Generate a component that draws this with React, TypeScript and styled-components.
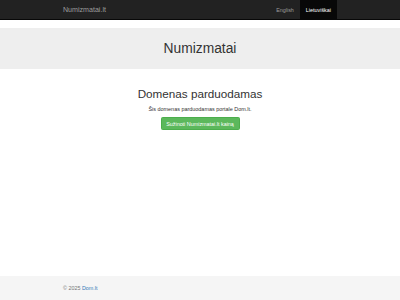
import styled, { createGlobalStyle } from "styled-components";

const GlobalStyle = createGlobalStyle`
    html, body {
        margin: 0;
        padding: 0;
        background: #fff;
        font-family: "Liberation Sans", Arial, sans-serif;
        color: #333;
    }
    #root {
        min-height: 300px;
    }
`;

const Page = styled.div`
    display: flex;
    flex-direction: column;
    min-height: 300px;
`;

const Navbar = styled.nav`
    background: #222;
    border-bottom: 1px solid #080808;
    height: 19px;
    margin-bottom: 8px;
`;

const Container = styled.div`
    width: 274px;
    margin: 0 auto;
    display: flex;
    align-items: center;
    height: 100%;
`;

const Brand = styled.a`
    font-size: 7.1px;
    color: #9d9d9d;
    text-decoration: none;
    flex: 1;
`;

const NavLink = styled.a<{ $active?: boolean }>`
    display: flex;
    align-items: center;
    height: 19px;
    padding: 0 6px;
    font-size: 5.4px;
    text-decoration: none;
    color: ${p => p.$active ? "#fff" : "#9d9d9d"};
    background: ${p => p.$active ? "#080808" : "transparent"};
`;

const Jumbotron = styled.header`
    background: #eee;
    height: 41px;
    display: flex;
    align-items: center;
    justify-content: center;
`;

const Title = styled.h1`
    margin: 0;
    font-size: 13.8px;
    font-weight: 400;
    color: #333;
`;

const Main = styled.main`
    flex: 1;
    display: flex;
    flex-direction: column;
    align-items: center;
    padding-top: 17px;
`;

const Heading = styled.h2`
    margin: 0 0 4px;
    font-size: 11.7px;
    font-weight: 400;
    line-height: 15px;
    color: #333;
`;

const Lead = styled.p`
    margin: 0 0 4px;
    font-size: 5.45px;
    line-height: 8px;
`;

const Button = styled.a`
    display: flex;
    align-items: center;
    justify-content: center;
    width: 79px;
    height: 13px;
    box-sizing: border-box;
    background: #5cb85c;
    border: 1px solid #4cae4c;
    border-radius: 1.5px;
    color: #fff;
    font-size: 5.4px;
    text-decoration: none;
`;

const Footer = styled.footer`
    background: #f5f5f5;
    height: 24px;
`;

const FooterText = styled.p`
    margin: 0;
    font-size: 5.4px;
    color: #777;
`;

const FooterLink = styled.a`
    color: #337ab7;
    text-decoration: none;
`;

export default function App() {
    return (
        <>
            <GlobalStyle />
            <Page>
                <Navbar>
                    <Container>
                        <Brand href="#">Numizmatai.lt</Brand>
                        <NavLink href="#">English</NavLink>
                        <NavLink href="#" $active>Lietuviškai</NavLink>
                    </Container>
                </Navbar>
                <Jumbotron>
                    <Title>Numizmatai</Title>
                </Jumbotron>
                <Main>
                    <Heading>Domenas parduodamas</Heading>
                    <Lead>Šis domenas parduodamas portale Dom.lt.</Lead>
                    <Button href="#">Sužinoti Numizmatai.lt kainą</Button>
                </Main>
                <Footer>
                    <Container>
                        <FooterText>© 2025 <FooterLink href="#">Dom.lt</FooterLink></FooterText>
                    </Container>
                </Footer>
            </Page>
        </>
    );
}
